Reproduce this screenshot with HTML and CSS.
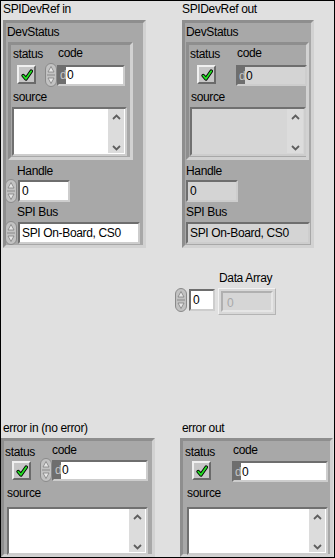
FILE: index.html
```html
<!DOCTYPE html>
<html lang="en">
  <head>
    <meta charset="UTF-8" />
    <title>SPI Device Panel</title>
    <link rel="stylesheet" href="styles.css">
  </head>
  <body>
    <svg class="defs" width="0" height="0">
      <symbol id="incdec" viewBox="0 0 12 24">
        <rect x="0.5" y="0.5" width="11" height="23" rx="5.5" fill="#c2c2c2" stroke="#8a8a8a" />
        <path d="M2 12h8" stroke="#8a8a8a" />
        <path d="M6 3.5l3 5.5H3z" fill="#e6e6e6" stroke="#808080" stroke-width="0.8" />
        <path d="M3 15h6l-3 5.5z" fill="#e6e6e6" stroke="#808080" stroke-width="0.8" />
      </symbol>
      <symbol id="check" viewBox="0 0 12 12">
        <path d="M2.2 6.6L5 9.8L10.2 2.2" fill="none" stroke="#000" stroke-width="3.6" stroke-linecap="round" stroke-linejoin="round" />
        <path d="M2.2 6.6L5 9.8L10.2 2.2" fill="none" stroke="#22e022" stroke-width="1.8" stroke-linecap="round" stroke-linejoin="round" />
      </symbol>
      <symbol id="up" viewBox="0 0 9 6">
        <path d="M1 5L4.5 1.5L8 5" fill="none" stroke="#5e5e5e" stroke-width="1.8" />
      </symbol>
      <symbol id="down" viewBox="0 0 9 6">
        <path d="M1 1L4.5 4.5L8 1" fill="none" stroke="#5e5e5e" stroke-width="1.8" />
      </symbol>
    </svg>

    <div class="panel">
      <!-- SPIDevRef in -->
      <div class="lbl obj t-in">SPIDevRef in</div>
      <div class="cluster obj cl-in">
        <div class="lbl devstatus">DevStatus</div>
        <div class="cluster inner">
          <div class="status-row">
            <div class="status-col">
              <div class="lbl">status</div>
              <span class="led"><svg><use href="#check" /></svg></span>
            </div>
            <div class="code-col">
              <div class="lbl">code</div>
              <div class="num">
                <svg class="incdec"><use href="#incdec" /></svg>
                <div class="numbox code"><span class="radix">d</span><span class="val">0</span></div>
              </div>
            </div>
          </div>
          <div class="lbl source">source</div>
          <div class="strbox">
            <div class="scroll">
              <svg><use href="#up" /></svg>
              <svg><use href="#down" /></svg>
            </div>
          </div>
        </div>
        <div class="lbl handle">Handle</div>
        <div class="num handle-num">
          <svg class="incdec"><use href="#incdec" /></svg>
          <div class="numbox handle-box"><span class="val">0</span></div>
        </div>
        <div class="lbl bus">SPI Bus</div>
        <div class="num bus-num">
          <svg class="incdec"><use href="#incdec" /></svg>
          <div class="numbox bus-box"><span class="val">SPI On-Board, CS0</span></div>
        </div>
      </div>

      <!-- SPIDevRef out -->
      <div class="lbl obj t-out">SPIDevRef out</div>
      <div class="cluster obj cl-out">
        <div class="lbl devstatus">DevStatus</div>
        <div class="cluster inner">
          <div class="status-row">
            <div class="status-col">
              <div class="lbl">status</div>
              <span class="led"><svg><use href="#check" /></svg></span>
            </div>
            <div class="code-col">
              <div class="lbl">code</div>
              <div class="num">
                <div class="numbox code ind"><span class="radix">d</span><span class="val">0</span></div>
              </div>
            </div>
          </div>
          <div class="lbl source">source</div>
          <div class="strbox ind">
            <div class="scroll">
              <svg><use href="#up" /></svg>
              <svg><use href="#down" /></svg>
            </div>
          </div>
        </div>
        <div class="lbl handle">Handle</div>
        <div class="num handle-num">
          <div class="numbox handle-box ind"><span class="val">0</span></div>
        </div>
        <div class="lbl bus">SPI Bus</div>
        <div class="num bus-num">
          <div class="numbox bus-box ind"><span class="val">SPI On-Board, CS0</span></div>
        </div>
      </div>

      <!-- Data Array -->
      <div class="obj array">
        <div class="arr-index">
          <svg class="incdec tall"><use href="#incdec" /></svg>
          <div class="numbox idx-box"><span class="val">0</span></div>
        </div>
        <div class="arr-body">
          <div class="lbl">Data Array</div>
          <div class="arr-elem"><div class="elem-box">0</div></div>
        </div>
      </div>

      <!-- error in -->
      <div class="lbl obj t-errin">error in (no error)</div>
      <div class="cluster obj cl-err cl-errin">
        <div class="status-row">
          <div class="status-col">
            <div class="lbl">status</div>
            <span class="led"><svg><use href="#check" /></svg></span>
          </div>
          <div class="code-col">
            <div class="lbl">code</div>
            <div class="num">
              <svg class="incdec"><use href="#incdec" /></svg>
              <div class="numbox code"><span class="radix">d</span><span class="val">0</span></div>
            </div>
          </div>
        </div>
        <div class="lbl source">source</div>
        <div class="strbox">
          <div class="scroll">
            <svg><use href="#up" /></svg>
            <svg><use href="#down" /></svg>
          </div>
        </div>
      </div>

      <!-- error out -->
      <div class="lbl obj t-errout">error out</div>
      <div class="cluster obj cl-err cl-errout">
        <div class="status-row">
          <div class="status-col">
            <div class="lbl">status</div>
            <span class="led"><svg><use href="#check" /></svg></span>
          </div>
          <div class="code-col">
            <div class="lbl">code</div>
            <div class="num">
              <div class="numbox code"><span class="radix">d</span><span class="val">0</span></div>
            </div>
          </div>
        </div>
        <div class="lbl source">source</div>
        <div class="strbox">
          <div class="scroll">
            <svg><use href="#up" /></svg>
            <svg><use href="#down" /></svg>
          </div>
        </div>
      </div>
    </div>
  </body>
</html>
```

FILE: styles.css
```css
body {
  margin: 0;
  font: 12px/14px "Liberation Sans", Arial, sans-serif;
  letter-spacing: -0.35px;
  color: #000;
}

.defs {
  position: absolute;
}

/* front panel: objects sit on a free canvas */
.panel {
  position: relative;
  width: 335px;
  height: 558px;
  background: #e0e0e0;
  overflow: hidden;
}

.panel::after {
  content: "";
  position: absolute;
  inset: 0;
  border: 1px solid #000;
  pointer-events: none;
}

.obj {
  position: absolute;
}

.lbl {
  white-space: nowrap;
}

.t-in { left: 3px; top: 2px; }
.t-out { left: 182px; top: 2px; }
.t-errin { left: 3px; top: 421px; }
.t-errout { left: 182px; top: 421px; }

/* clusters */
.cluster {
  box-sizing: border-box;
  background: #a8a8a8;
  border: 3px solid;
  border-color: #8e8e8e #d2d2d2 #d2d2d2 #8e8e8e;
}

.cl-in { left: 3px; top: 20px; width: 143px; height: 228px; }
.cl-out { left: 182px; top: 20px; width: 132px; height: 228px; }
.cl-errin { left: 1px; top: 438px; width: 154px; height: 119px; }
.cl-errout { left: 180px; top: 438px; width: 153px; height: 119px; }

.devstatus { margin: 2px 0 0 1px; }

.inner {
  height: 118px;
  margin: 3px 0 0 2px;
  width: 125px;
}

.cl-out .inner {
  margin-left: 1px;
  width: 123px;
}

.status-row {
  display: flex;
  height: 42px;
}

.status-col {
  width: 34px;
  flex-shrink: 0;
}

.status-col .lbl { margin: 2px 0 0 2px; }

.code-col .lbl { margin: 1px 0 0 13px; }

.num {
  display: flex;
  align-items: center;
}

.code-col .num { margin-top: 3px; }

.source { margin: 3px 0 0 2px; }

.handle { margin: 4px 0 0 11px; }
.handle-num { margin: 1px 0 0 -1px; }
.bus { margin: 2px 0 0 11px; }
.bus-num { margin: 2px 0 0 -1px; }

.cl-out .status-col { width: 47px; }
.cl-out .status-col .lbl { margin-left: 1px; }
.cl-out .status-col .led { margin-left: 8px; }
.cl-out .code-col .lbl { margin-left: 1px; }
.cl-out .code-col .num { margin-top: 5px; }
.cl-out .handle { margin-left: 1px; }
.cl-out .handle-num { margin: 2px 0 0 1px; }
.cl-out .bus { margin: 3px 0 0 1px; }
.cl-out .bus-num { margin: 3px 0 0 1px; }

/* error clusters */
.cl-err .status-row { height: 41px; }
.cl-err .status-col { width: 36px; }
.cl-err .status-col .lbl { margin: 4px 0 0 1px; }
.cl-err .led { margin: 2px 0 0 8px; }
.cl-err .code-col .lbl { margin: 2px 0 0 12px; }
.cl-err .code-col .num { margin-top: 1px; }
.cl-err .code { width: 96px; }
.cl-err .source { margin: 4px 0 0 3px; }
.cl-err .strbox { margin: 7px 0 0 3px; width: 141px; height: 48px; }

.cl-errout .status-col { width: 49px; }
.cl-errout .status-col .lbl { margin-left: 2px; }
.cl-errout .led { margin-left: 9px; }
.cl-errout .code-col .lbl { margin-left: 1px; }
.cl-errout .code-col .num { margin-top: 4px; }
.cl-errout .source { margin-left: 4px; }
.cl-errout .strbox { margin-left: 4px; }

/* boolean led */
.led {
  box-sizing: border-box;
  display: flex;
  align-items: center;
  justify-content: center;
  width: 19px;
  height: 19px;
  margin: 4px 0 0 6px;
  background: #c6c6c6;
  border: 2px solid;
  border-color: #f0f0f0 #6a6a6a #6a6a6a #f0f0f0;
}

.led svg {
  width: 12px;
  height: 12px;
}

/* numeric and ring controls */
.incdec {
  width: 12px;
  height: 24px;
  flex-shrink: 0;
}

.incdec.tall {
  height: 26px;
}

.numbox {
  box-sizing: border-box;
  display: flex;
  align-items: center;
  height: 22px;
  background: #fff;
  border: 2px solid;
  border-color: #6e6e6e #cdcdcd #cdcdcd #6e6e6e;
  margin-left: 1px;
}

.numbox .val {
  padding-left: 2px;
}

.numbox.ind {
  background: #d4d4d4;
  margin-left: 0;
}

.code {
  width: 68px;
  height: 21px;
  margin-left: 0;
}

.cl-out .code { width: 71px; }

.radix {
  align-self: stretch;
  display: flex;
  align-items: center;
  width: 6px;
  padding-left: 1px;
  background: #6e6e6e;
  color: #c4c4c4;
}

.code .val {
  padding-left: 1px;
}

.handle-box { width: 52px; }
.bus-box { width: 122px; }
.cl-out .bus-box { width: 124px; }

/* string controls */
.strbox {
  box-sizing: border-box;
  display: flex;
  justify-content: flex-end;
  width: 115px;
  height: 49px;
  margin: 3px 0 0 1px;
  background: #fff;
  border: 2px solid;
  border-color: #707070 #cdcdcd #cdcdcd #707070;
}

.strbox.ind {
  background: #d6d6d6;
  width: 116px;
}

.scroll {
  display: flex;
  flex-direction: column;
  justify-content: space-between;
  align-items: center;
  width: 16px;
  margin: 0 1px 1px 0;
  padding: 5px 0 2px;
  box-sizing: border-box;
  background: #dcdcdc;
}

.scroll svg {
  width: 9px;
  height: 6px;
}

/* array */
.array {
  left: 175px;
  top: 271px;
  display: flex;
}

.arr-index {
  display: flex;
  align-items: center;
  margin-top: 14px;
}

.idx-box {
  width: 26px;
  margin-left: 2px;
}

.arr-body {
  margin-left: 3px;
}

.arr-body .lbl {
  margin-left: 1px;
}

.arr-elem {
  box-sizing: border-box;
  width: 58px;
  height: 27px;
  margin-top: 3px;
  padding: 2px;
  background: #d8d8d8;
  border: 1px solid;
  border-color: #f2f2f2 #b4b4b4 #b4b4b4 #f2f2f2;
}

.elem-box {
  box-sizing: border-box;
  height: 100%;
  padding: 3px 0 0 4px;
  background: #d6d6d6;
  color: #a8a8a8;
  border: 2px solid;
  border-color: #b0b0b0 #e6e6e6 #e6e6e6 #b0b0b0;
}
```
